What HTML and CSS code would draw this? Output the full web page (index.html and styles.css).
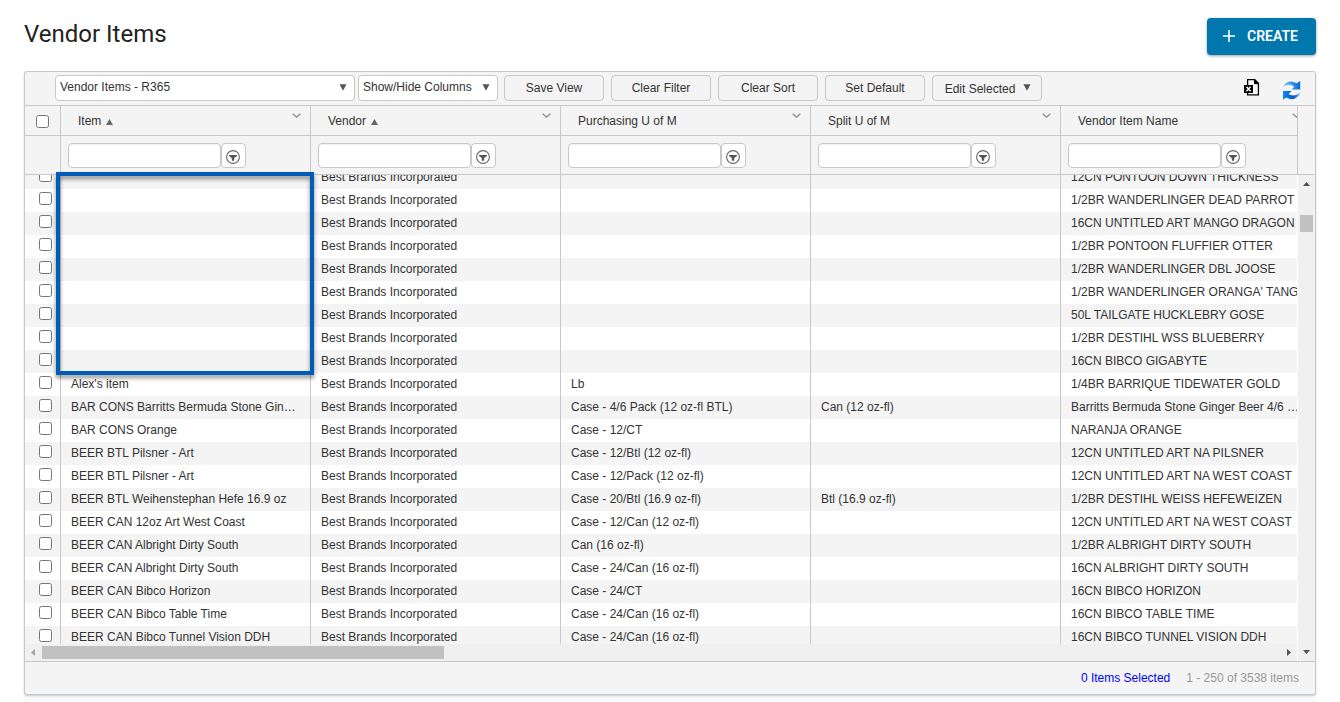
FILE: index.html
```html
<!DOCTYPE html>
<html lang="en">
<head>
<meta charset="utf-8">
<title>Vendor Items</title>
<link rel="stylesheet" href="styles.css">
</head>
<body>
<svg class="sprite" aria-hidden="true">
  <symbol id="i-chev" viewBox="0 0 9 5"><path d="M.7.7 4.5 4.2 8.3.7" fill="none" stroke="#8c8c8c" stroke-width="1.3"/></symbol>
  <symbol id="i-filter" viewBox="0 0 14 14"><circle cx="7" cy="7" r="6.4" fill="none" stroke="#666" stroke-width="1.1"/><path d="M3 5h8v1L8.200 8v2.800H5.800V8L3 6z" fill="#555"/></symbol>
  <symbol id="i-down" viewBox="0 0 8 7"><path d="M.5.3h7L4 6.800z" fill="#555"/></symbol>
  <symbol id="i-sort" viewBox="0 0 7 6"><path d="M0 6h7L3.500 0z" fill="#666"/></symbol>
</svg>
<header class="page-head">
  <h1>Vendor Items</h1>
  <button class="create" type="button"><svg width="12" height="12" viewBox="0 0 12 12" aria-hidden="true"><path d="M6 0v12M0 6h12" stroke="#fff" stroke-width="1.6"/></svg><span>CREATE</span></button>
</header>
<main class="content">
<section class="panel">
  <div class="toolbar">
    <span class="pick pick-view"><select aria-label="View"><option>Vendor Items - R365</option></select><svg class="caret"><use href="#i-down"/></svg></span>
    <span class="pick pick-cols"><select aria-label="Columns"><option>Show/Hide Columns</option></select><svg class="caret"><use href="#i-down"/></svg></span>
    <div class="actions">
      <button class="btn" type="button">Save View</button>
      <button class="btn" type="button">Clear Filter</button>
      <button class="btn" type="button">Clear Sort</button>
      <button class="btn" type="button">Set Default</button>
      <button class="btn menu" type="button">Edit Selected <svg class="down"><use href="#i-down"/></svg></button>
    </div>
    <div class="tools">
      <button class="tool" type="button" aria-label="Export to Excel"><svg width="16" height="17" viewBox="0 0 16 17"><path d="M3.600 6V.7h7.200L14.400 4.300V15.800H3.600V13.500" fill="#fff" stroke="#000" stroke-width="1.3"/><path d="M10.500.7v4h4z" fill="#000" stroke="#000"/><path d="M0 6h9v8H0z"/><path d="M2.500 7.800l4 4.500M6.500 7.800l-4 4.500" stroke="#fff" stroke-width="1.4"/></svg></button>
      <button class="tool refresh" type="button" aria-label="Refresh"><svg width="19" height="20" viewBox="0 0 19 20"><defs><linearGradient id="g1" x1="0" x2="1"><stop offset="0" stop-color="#7cc8fa"/><stop offset="1" stop-color="#0668d8"/></linearGradient><linearGradient id="g2" x1="0" x2="1"><stop offset="0" stop-color="#0c8df5"/><stop offset=".6" stop-color="#0555c8"/><stop offset="1" stop-color="#6fb6f2"/></linearGradient></defs><path d="M1 7C2.500 2.500 8-.8 14.500 3.300L18.200 1v8.500H9.500l2.800-2.800C8.500 3.800 4 4.500 1 7z" fill="url(#g1)"/><path d="M18 12.500C16.500 18 10.500 21.500 4.500 17.500L1 19.800V11h8.500L6.600 14c3.500 2.500 8 1.500 11.400-1.500z" fill="url(#g2)"/></svg></button>
    </div>
  </div>
  <div class="head">
    <div class="clip">
      <table class="grid">
        <colgroup><col class="c-check"><col><col><col><col><col></colgroup>
        <tr class="titles">
          <th class="all"><input type="checkbox" aria-label="Select all"></th>
          <th><div class="th">Item <svg class="sort"><use href="#i-sort"/></svg><svg class="chev"><use href="#i-chev"/></svg></div></th>
          <th><div class="th">Vendor <svg class="sort"><use href="#i-sort"/></svg><svg class="chev"><use href="#i-chev"/></svg></div></th>
          <th><div class="th">Purchasing U of M<svg class="chev"><use href="#i-chev"/></svg></div></th>
          <th><div class="th">Split U of M<svg class="chev"><use href="#i-chev"/></svg></div></th>
          <th><div class="th">Vendor Item Name<svg class="chev"><use href="#i-chev"/></svg></div></th>
        </tr>
        <tr class="filters">
          <td></td>
          <td><div class="filter"><input type="text" aria-label="Filter item"><button type="button" aria-label="Item filter options"><svg><use href="#i-filter"/></svg></button></div></td>
          <td><div class="filter"><input type="text" aria-label="Filter vendor"><button type="button" aria-label="Vendor filter options"><svg><use href="#i-filter"/></svg></button></div></td>
          <td><div class="filter"><input type="text" aria-label="Filter purchasing unit"><button type="button" aria-label="Purchasing unit filter options"><svg><use href="#i-filter"/></svg></button></div></td>
          <td><div class="filter"><input type="text" aria-label="Filter split unit"><button type="button" aria-label="Split unit filter options"><svg><use href="#i-filter"/></svg></button></div></td>
          <td><div class="filter"><input type="text" aria-label="Filter vendor item name"><button type="button" aria-label="Vendor item name filter options"><svg><use href="#i-filter"/></svg></button></div></td>
        </tr>
      </table>
    </div>
  </div>
  <div class="body">
    <div class="rows">
      <table class="grid data">
        <colgroup><col class="c-check"><col><col><col><col><col></colgroup>
        <tr><td><input type="checkbox" aria-label="Select row"></td><td></td><td>Best Brands Incorporated</td><td></td><td></td><td>12CN PONTOON DOWN THICKNESS</td></tr>
        <tr><td><input type="checkbox" aria-label="Select row"></td><td></td><td>Best Brands Incorporated</td><td></td><td></td><td>1/2BR WANDERLINGER DEAD PARROT</td></tr>
        <tr><td><input type="checkbox" aria-label="Select row"></td><td></td><td>Best Brands Incorporated</td><td></td><td></td><td>16CN UNTITLED ART MANGO DRAGON</td></tr>
        <tr><td><input type="checkbox" aria-label="Select row"></td><td></td><td>Best Brands Incorporated</td><td></td><td></td><td>1/2BR PONTOON FLUFFIER OTTER</td></tr>
        <tr><td><input type="checkbox" aria-label="Select row"></td><td></td><td>Best Brands Incorporated</td><td></td><td></td><td>1/2BR WANDERLINGER DBL JOOSE</td></tr>
        <tr><td><input type="checkbox" aria-label="Select row"></td><td></td><td>Best Brands Incorporated</td><td></td><td></td><td>1/2BR WANDERLINGER ORANGA' TANG</td></tr>
        <tr><td><input type="checkbox" aria-label="Select row"></td><td></td><td>Best Brands Incorporated</td><td></td><td></td><td>50L TAILGATE HUCKLEBRY GOSE</td></tr>
        <tr><td><input type="checkbox" aria-label="Select row"></td><td></td><td>Best Brands Incorporated</td><td></td><td></td><td>1/2BR DESTIHL WSS BLUEBERRY</td></tr>
        <tr><td><input type="checkbox" aria-label="Select row"></td><td></td><td>Best Brands Incorporated</td><td></td><td></td><td>16CN BIBCO GIGABYTE</td></tr>
        <tr><td><input type="checkbox" aria-label="Select row"></td><td>Alex's item</td><td>Best Brands Incorporated</td><td>Lb</td><td></td><td>1/4BR BARRIQUE TIDEWATER GOLD</td></tr>
        <tr><td><input type="checkbox" aria-label="Select row"></td><td>BAR CONS Barritts Bermuda Stone Gin…</td><td>Best Brands Incorporated</td><td>Case - 4/6 Pack (12 oz-fl BTL)</td><td>Can (12 oz-fl)</td><td>Barritts Bermuda Stone Ginger Beer 4/6 …</td></tr>
        <tr><td><input type="checkbox" aria-label="Select row"></td><td>BAR CONS Orange</td><td>Best Brands Incorporated</td><td>Case - 12/CT</td><td></td><td>NARANJA ORANGE</td></tr>
        <tr><td><input type="checkbox" aria-label="Select row"></td><td>BEER BTL Pilsner - Art</td><td>Best Brands Incorporated</td><td>Case - 12/Btl (12 oz-fl)</td><td></td><td>12CN UNTITLED ART NA PILSNER</td></tr>
        <tr><td><input type="checkbox" aria-label="Select row"></td><td>BEER BTL Pilsner - Art</td><td>Best Brands Incorporated</td><td>Case - 12/Pack (12 oz-fl)</td><td></td><td>12CN UNTITLED ART NA WEST COAST</td></tr>
        <tr><td><input type="checkbox" aria-label="Select row"></td><td>BEER BTL Weihenstephan Hefe 16.9 oz</td><td>Best Brands Incorporated</td><td>Case - 20/Btl (16.9 oz-fl)</td><td>Btl (16.9 oz-fl)</td><td>1/2BR DESTIHL WEISS HEFEWEIZEN</td></tr>
        <tr><td><input type="checkbox" aria-label="Select row"></td><td>BEER CAN 12oz Art West Coast</td><td>Best Brands Incorporated</td><td>Case - 12/Can (12 oz-fl)</td><td></td><td>12CN UNTITLED ART NA WEST COAST</td></tr>
        <tr><td><input type="checkbox" aria-label="Select row"></td><td>BEER CAN Albright Dirty South</td><td>Best Brands Incorporated</td><td>Can (16 oz-fl)</td><td></td><td>1/2BR ALBRIGHT DIRTY SOUTH</td></tr>
        <tr><td><input type="checkbox" aria-label="Select row"></td><td>BEER CAN Albright Dirty South</td><td>Best Brands Incorporated</td><td>Case - 24/Can (16 oz-fl)</td><td></td><td>16CN ALBRIGHT DIRTY SOUTH</td></tr>
        <tr><td><input type="checkbox" aria-label="Select row"></td><td>BEER CAN Bibco Horizon</td><td>Best Brands Incorporated</td><td>Case - 24/CT</td><td></td><td>16CN BIBCO HORIZON</td></tr>
        <tr><td><input type="checkbox" aria-label="Select row"></td><td>BEER CAN Bibco Table Time</td><td>Best Brands Incorporated</td><td>Case - 24/Can (16 oz-fl)</td><td></td><td>16CN BIBCO TABLE TIME</td></tr>
        <tr><td><input type="checkbox" aria-label="Select row"></td><td>BEER CAN Bibco Tunnel Vision DDH</td><td>Best Brands Incorporated</td><td>Case - 24/Can (16 oz-fl)</td><td></td><td>16CN BIBCO TUNNEL VISION DDH</td></tr>
      </table>
    </div>
    <div class="vbar"><svg width="7" height="4" viewBox="0 0 7 4"><path d="M0 4h7L3.500 0z" fill="#505050"/></svg><i class="vthumb"></i><svg class="end" width="7" height="4" viewBox="0 0 7 4"><path d="M0 0h7L3.500 4z" fill="#505050"/></svg></div>
    <div class="hbar"><svg width="4" height="7" viewBox="0 0 4 7"><path d="M4 0v7L0 3.500z" fill="#a3a3a3"/></svg><i class="hthumb"></i><svg class="end" width="4" height="7" viewBox="0 0 4 7"><path d="M0 0v7l4-3.500z" fill="#505050"/></svg></div>
    <div class="highlight"></div>
  </div>
  <footer class="foot"><a href="#">0 Items Selected</a><span>1 - 250 of 3538 items</span></footer>
</section>
</main>
</body>
</html>
```

FILE: styles.css
```css
* { box-sizing: border-box; }
body {
  margin: 0;
  height: 100vh;
  display: flex;
  flex-direction: column;
  overflow: hidden;
  background: #fff;
  color: #333;
  font: 12px/16px "Liberation Sans", Arial, sans-serif;
}
button, input, select { font: inherit; color: inherit; margin: 0; }
svg { display: block; flex: none; }
.sprite { position: absolute; width: 0; height: 0; }

.page-head {
  display: flex;
  justify-content: space-between;
  align-items: flex-start;
  padding: 18px 24px 16px;
}
h1 { margin: 0; color: #222; font: 400 24px/32px Roboto, sans-serif; }
.create {
  display: flex;
  align-items: center;
  justify-content: center;
  gap: 12px;
  width: 109px;
  height: 37px;
  padding: 0 2px 2px 0;
  border: 0;
  border-radius: 4px;
  background: #0078ae;
  color: #fff;
  font: 600 14px/20px Roboto, sans-serif;
  box-shadow: 0 1px 3px rgba(0, 0, 0, .4);
}

.content { flex: 1; min-height: 0; margin: 0 24px; padding-bottom: 7px; background: #f8f9fb; }
.panel {
  height: 100%;
  display: flex;
  flex-direction: column;
  border: 1px solid #c8c8c8;
  border-radius: 3px;
  background: #f4f4f4;
  box-shadow: 0 1px 2px rgba(0, 0, 0, .2);
}

.toolbar {
  display: flex;
  align-items: center;
  height: 34px;
  padding: 0 14px 2px 30px;
  border-bottom: 1px solid #c8c8c8;
}
.pick { display: grid; align-items: center; height: 26px; margin-right: 3px; }
.pick > * { grid-area: 1 / 1; }
.pick-view { width: 300px; }
.pick-cols { width: 140px; margin-right: 6px; }
.pick select {
  appearance: none;
  width: 100%;
  height: 26px;
  padding: 0 20px 2px 4px;
  border: 1px solid #c8c8c8;
  border-radius: 4px;
  background: #fff;
}
.caret, .down { width: 8px; height: 7px; }
.caret { justify-self: end; margin-right: 8px; pointer-events: none; }
.actions { display: flex; gap: 7px; }
.btn {
  width: 100px;
  height: 26px;
  padding: 0;
  border: 1px solid #c8c8c8;
  border-radius: 4px;
  background: #f4f4f4;
}
.menu { display: flex; align-items: center; justify-content: center; gap: 8px; width: 110px; padding: 2px 0 0 2px; }
.menu .down { margin-bottom: 3px; }
.tools { display: flex; align-items: center; gap: 22px; margin-left: auto; }
.tool { padding: 0; border: 0; background: none; }
.refresh { padding-top: 4px; }

.head { padding-right: 17px; border-bottom: 1px solid #c8c8c8; }
.clip { overflow: hidden; border-right: 1px solid #c8c8c8; }
.grid { table-layout: fixed; width: 1286px; border-collapse: separate; border-spacing: 0; }
.grid col { width: 250px; }
.grid .c-check { width: 36px; }
.grid th, .grid td { padding: 0; border-right: 1px solid #c8c8c8; }
.grid input[type="checkbox"] { display: block; width: 13px; height: 13px; }
.titles th { height: 30px; border-bottom: 1px solid #c8c8c8; font-weight: 400; text-align: left; }
.titles .all { padding: 2px 0 0 11px; }
.th { display: flex; align-items: center; height: 29px; padding: 0 9px 0 17px; }
.sort { width: 7px; height: 6px; margin: 3px 0 0 5px; }
.chev { width: 9px; height: 5px; margin: 0 0 11px auto; }
.filters td { height: 38px; }
.filter { display: flex; padding-left: 7px; }
.filter input {
  width: 153px;
  height: 25px;
  border: 1px solid #c8c8c8;
  border-radius: 4px;
  background: #fff;
  box-shadow: inset 0 1px 1px rgba(0, 0, 0, .06);
}
.filter button {
  display: flex;
  align-items: center;
  justify-content: center;
  width: 25px;
  height: 25px;
  padding: 3px 1px 0 0;
  border: 1px solid #c8c8c8;
  border-radius: 4px;
  background: #fff;
}
.filter svg { width: 14px; height: 14px; }

.body {
  position: relative;
  flex: 1;
  min-height: 0;
  display: grid;
  grid-template: minmax(0, 1fr) 17px / minmax(0, 1fr) 18px;
}
.rows { overflow: hidden; background: #fff; }
/* The list is scrolled part-way into its first visible row. */
.data { margin-top: -9px; }
.data td { height: 23px; padding-left: 10px; line-height: 15px; white-space: nowrap; }
.data td:first-child { padding: 0 0 4px 14px; }
.data tr:nth-child(odd) { background: #f4f4f4; }
.vbar {
  grid-row: 1 / 3;
  grid-column: 2;
  display: flex;
  flex-direction: column;
  align-items: center;
  padding: 7px 0;
  background: #f0f0f0;
  border-left: 1px solid #fff;
}
.vthumb { width: 13px; height: 17px; margin-top: 29px; background: #c1c1c1; }
.vbar .end { margin-top: auto; }
.hbar { display: flex; align-items: center; padding: 0 6px; background: #f0f0f0; }
.hthumb { width: 402px; height: 13px; margin-left: 7px; background: #c1c1c1; }
.hbar .end { margin-left: auto; }
.highlight {
  position: absolute;
  left: 31px;
  top: -3px;
  width: 258px;
  height: 203px;
  border: 4px solid #005cb5;
  filter: drop-shadow(0 3px 2px rgba(0, 0, 0, .45));
  pointer-events: none;
}

.foot {
  display: flex;
  align-items: center;
  justify-content: flex-end;
  gap: 16px;
  height: 33px;
  padding: 0 16px;
  border-top: 1px solid #c8c8c8;
}
.foot a { color: #00f; text-decoration: none; }
.foot span { color: #999; }
```
